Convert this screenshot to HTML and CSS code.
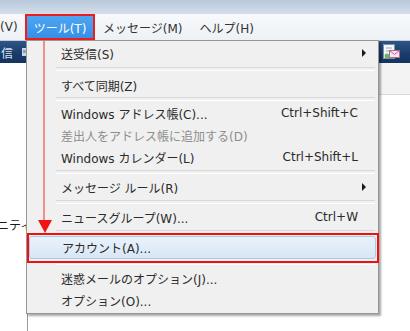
FILE: index.html
```html
<!DOCTYPE html>
<html lang="ja">
<head>
<meta charset="utf-8">
<link rel="stylesheet" href="styles.css">
</head>
<body>
<div class="screen">
  <div class="titlebar"></div>
  <nav class="menubar">
    <span class="mb-item mb-v">(V)</span>
    <span class="mb-item mb-active">ツール(T)</span>
    <span class="mb-item mb-msg">メッセージ(M)</span>
    <span class="mb-item mb-help">ヘルプ(H)</span>
  </nav>
  <div class="toolbar">
    <div class="tb-left">
      <span class="tb-label">信</span>
      <svg class="tb-icon-small" width="6" height="12" viewBox="0 0 6 12"><rect x="1" y="2" width="5" height="8" fill="#c9d6e6"/><rect x="2" y="4" width="3" height="3" fill="#8aa4c6"/></svg>
    </div>
    <div class="tb-right">
      <svg width="20" height="18" viewBox="0 0 20 18">
        <rect x="2.5" y="1.5" width="11" height="14" fill="#f4f6fa" stroke="#8090a8"/>
        <line x1="5" y1="5" x2="11" y2="5" stroke="#9aa8bc"/>
        <line x1="5" y1="8" x2="11" y2="8" stroke="#9aa8bc"/>
        <rect x="8.5" y="7.5" width="10" height="7" fill="#fbe4ee" stroke="#b06a8a"/>
        <path d="M8.5 7.5 L13.5 11.5 L18.5 7.5" fill="none" stroke="#b06a8a"/>
        <circle cx="6" cy="13" r="2.5" fill="#6fb36a"/>
      </svg>
    </div>
  </div>
  <div class="content">
    <div class="pane-left"><span class="pane-text">ニティ</span></div>
    <div class="pane-right"><div class="pane-header"></div></div>
  </div>

  <div class="menu">
    <div class="mi"><span class="mi-label">送受信(S)</span><span class="mi-sub"></span></div>
    <div class="sep sep-a"></div>
    <div class="mi"><span class="mi-label">すべて同期(Z)</span></div>
    <div class="sep sep-b"></div>
    <div class="mi"><span class="mi-label">Windows アドレス帳(C)...</span><span class="mi-key">Ctrl+Shift+C</span></div>
    <div class="mi mi-disabled"><span class="mi-label">差出人をアドレス帳に追加する(D)</span></div>
    <div class="mi"><span class="mi-label">Windows カレンダー(L)</span><span class="mi-key">Ctrl+Shift+L</span></div>
    <div class="sep"></div>
    <div class="mi"><span class="mi-label">メッセージ ルール(R)</span><span class="mi-sub"></span></div>
    <div class="sep"></div>
    <div class="mi"><span class="mi-label">ニュースグループ(W)...</span><span class="mi-key">Ctrl+W</span></div>
    <div class="sep"></div>
    <div class="mi mi-hot"><span class="mi-label">アカウント(A)...</span></div>
    <div class="sep"></div>
    <div class="mi"><span class="mi-label">迷惑メールのオプション(J)...</span></div>
    <div class="mi"><span class="mi-label">オプション(O)...</span></div>
  </div>

  <div class="arrow-line"></div>
  <div class="arrow-head"></div>
  <div class="callout"></div>
</div>
</body>
</html>
```
FILE: styles.css
```css
* { box-sizing: border-box; }
html, body { margin: 0; padding: 0; background: #fff; }
body {
  font-family: "DejaVu Sans", "Noto Sans CJK JP", sans-serif;
  font-size: 12px;
  color: #2b2b2b;
}
.screen {
  position: relative;
  width: 410px;
  height: 331px;
  overflow: hidden;
  display: flex;
  flex-direction: column;
}
.titlebar {
  height: 14px;
  background: linear-gradient(#b8c9db, #d3dee9);
}
.menubar {
  height: 27px;
  display: flex;
  align-items: stretch;
  background: linear-gradient(#f7f9fb, #edf1f5);
  border-bottom: 1px solid #c3cbd5;
}
.mb-item {
  display: flex;
  align-items: center;
  white-space: nowrap;
  color: #333;
}
.mb-v {
  width: 25px;
}
.mb-active {
  width: 70px;
  height: 26px;
  justify-content: center;
  background: linear-gradient(#4ea6f2, #3590e6);
  border: 2px solid #ee1c1c;
  color: #fff;
}
.mb-msg { margin-left: 8px; }
.mb-help { margin-left: 17px; }

.toolbar {
  height: 22px;
  display: flex;
  justify-content: space-between;
  background: linear-gradient(#2d5789, #1a3a6a 60%, #16345f);
}
.tb-left {
  display: flex;
  align-items: center;
  gap: 8px;
  padding-left: 1px;
}
.tb-label { color: #d7e2f0; }
.tb-right {
  display: flex;
  align-items: center;
  padding-right: 9px;
}
.content {
  flex: 1;
  display: flex;
}
.pane-left {
  width: 28px;
  border-right: 1px solid #9a9a9a;
  padding-top: 155px;
}
.pane-text {
  display: block;
  white-space: nowrap;
  color: #1a1a1a;
  line-height: 16px;
  margin-left: -3px;
}
.pane-right { flex: 1; }
.pane-header {
  height: 32px;
  background: #f3f3f3;
  border-bottom: 1px solid #dadada;
}

/* popup menu */
.menu {
  position: absolute;
  left: 26px;
  top: 40px;
  width: 353px;
  height: 274px;
  background: #f0f0f0;
  border: 1px solid #979797;
  padding: 1px 0;
  box-shadow: 2px 2px 2px rgba(0,0,0,0.35);
  display: flex;
  flex-direction: column;
}
.mi {
  height: 22px;
  display: flex;
  align-items: center;
  padding: 0 20px 0 34px;
  white-space: nowrap;
  color: #2b2b2b;
}
.mi-label { flex: 1; }
.mi-disabled { color: #8e8e8e; }
.mi-sub {
  width: 0;
  height: 0;
  border-top: 4px solid transparent;
  border-bottom: 4px solid transparent;
  border-left: 4px solid #1a1a1a;
  margin-right: -8px;
}
.mi-hot {
  height: 23px;
  margin: 0 2px;
  padding-left: 32px;
  border: 1px solid #a9cbea;
  border-radius: 3px;
  background: linear-gradient(#e9f2fb, #d8e7f5);
}
.sep {
  height: 8px;
  display: flex;
  align-items: center;
  margin: 0 3px 0 29px;
}
.sep::before {
  content: "";
  flex: 1;
  height: 2px;
  border-top: 1px solid #d9d9d9;
  border-bottom: 1px solid #ffffff;
}
.sep-a { height: 10px; }
.sep-b { height: 6px; }

/* annotations */
.arrow-line {
  position: absolute;
  left: 43px;
  top: 41px;
  width: 2px;
  height: 181px;
  background: rgba(240, 60, 60, 0.55);
}
.arrow-head {
  position: absolute;
  left: 38px;
  top: 220px;
  width: 0;
  height: 0;
  border-left: 7px solid transparent;
  border-right: 7px solid transparent;
  border-top: 13px solid #f01515;
}
.callout {
  position: absolute;
  left: 27px;
  top: 233px;
  width: 352px;
  height: 30px;
  border: 2px solid #f01010;
}
```
